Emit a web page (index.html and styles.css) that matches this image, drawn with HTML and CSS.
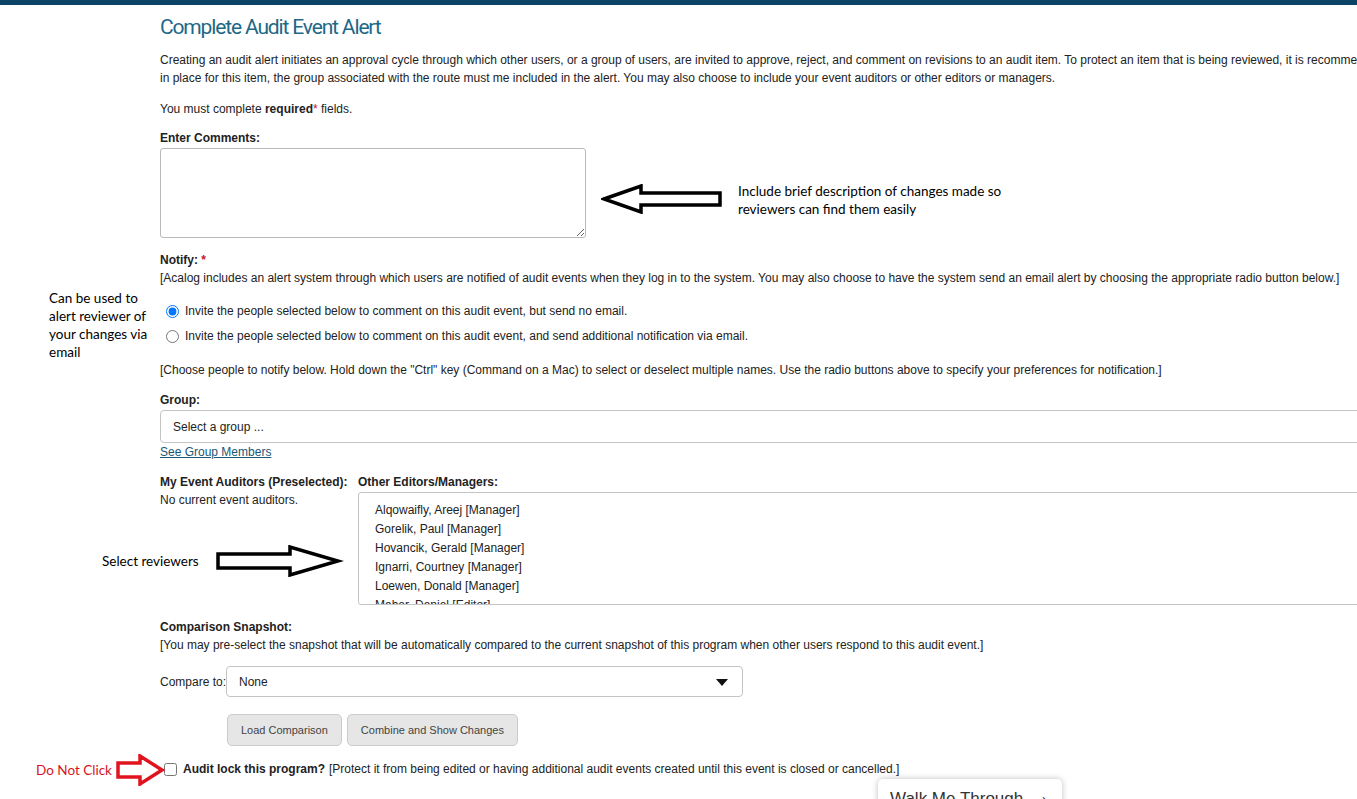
FILE: index.html
```html
<!DOCTYPE html>
<html lang="en">
<head>
    <meta charset="UTF-8">
    <meta name="viewport" content="width=device-width, initial-scale=1.0">
    <title>Complete Audit Event Alert</title>
    <link rel="stylesheet" href="styles.css">
</head>
<body>
    <div class="topbar"></div>

    <main class="page">
        <h1 class="title">Complete Audit Event Alert</h1>

        <p class="intro">Creating an audit alert initiates an approval cycle through which other users, or a group of users, are invited to approve, reject, and comment on revisions to an audit item. To protect an item that is being reviewed, it is recommended that you audit lock it. If an approval route is<br>in place for this item, the group associated with the route must me included in the alert. You may also choose to include your event auditors or other editors or managers.</p>

        <p class="required-note">You must complete <b>required</b><span class="req">*</span> fields.</p>

        <label class="label" for="comments">Enter Comments:</label>
        <textarea id="comments" class="comments"></textarea>

        <div class="label notify-label">Notify: <span class="req">*</span></div>
        <p class="hint">[Acalog includes an alert system through which users are notified of audit events when they log in to the system. You may also choose to have the system send an email alert by choosing the appropriate radio button below.]</p>

        <div class="radios">
            <label class="radio"><input type="radio" name="notify" checked> Invite the people selected below to comment on this audit event, but send no email.</label>
            <label class="radio"><input type="radio" name="notify"> Invite the people selected below to comment on this audit event, and send additional notification via email.</label>
        </div>

        <p class="hint choose">[Choose people to notify below. Hold down the "Ctrl" key (Command on a Mac) to select or deselect multiple names. Use the radio buttons above to specify your preferences for notification.]</p>

        <div class="label group-label">Group:</div>
        <div class="group-select">Select a group ...</div>
        <a class="link" href="#">See Group Members</a>

        <div class="people">
            <div class="auditors">
                <div class="label">My Event Auditors (Preselected):</div>
                <div class="none">No current event auditors.</div>
            </div>
            <div class="editors">
                <div class="label">Other Editors/Managers:</div>
                <ul class="listbox">
                    <li>Alqowaifly, Areej [Manager]</li>
                    <li>Gorelik, Paul [Manager]</li>
                    <li>Hovancik, Gerald [Manager]</li>
                    <li>Ignarri, Courtney [Manager]</li>
                    <li>Loewen, Donald [Manager]</li>
                    <li>Maher, Daniel [Editor]</li>
                    <li>Smith, Laura [Editor]</li>
                </ul>
            </div>
        </div>

        <div class="label snapshot-label">Comparison Snapshot:</div>
        <p class="hint">[You may pre-select the snapshot that will be automatically compared to the current snapshot of this program when other users respond to this audit event.]</p>

        <div class="compare">
            <span class="compare-label">Compare to:</span>
            <div class="dropdown">None</div>
        </div>

        <div class="buttons">
            <button class="btn">Load Comparison</button>
            <button class="btn">Combine and Show Changes</button>
        </div>

        <label class="lock"><input type="checkbox"> <b>Audit lock this program?</b> [Protect it from being edited or having additional audit events created until this event is closed or cancelled.]</label>

        <!-- annotations pasted over the screenshot -->
        <div class="note note-comments">Include brief description of changes made so<br>reviewers can find them easily</div>
        <svg class="arrow arrow-left" width="124" height="30" viewBox="0 0 124 30">
            <polygon points="3,15 40,2 40,9 119,9 119,21 40,21 40,28" fill="#fff" stroke="#000" stroke-width="3.5" stroke-linejoin="miter"/>
        </svg>

        <div class="note note-email">Can be used to<br>alert reviewer of<br>your changes via<br>email</div>

        <div class="note note-reviewers">Select reviewers</div>
        <svg class="arrow arrow-right" width="128" height="32" viewBox="0 0 128 32">
            <polygon points="2,9 74,9 74,2 122,16 74,30 74,23 2,23" fill="#fff" stroke="#000" stroke-width="3.5" stroke-linejoin="miter"/>
        </svg>

        <div class="note note-click">Do Not Click</div>
        <svg class="arrow arrow-red" width="50" height="32" viewBox="0 0 50 32">
            <polygon points="2,9 24,9 24,2 46,16 24,30 24,23 2,23" fill="#fff" stroke="#e0141e" stroke-width="3.5" stroke-linejoin="miter"/>
        </svg>
    </main>

    <div class="walkme">Walk Me Through <span class="chev">&rsaquo;</span></div>
</body>
</html>
```

FILE: styles.css
```css
html, body {
    margin: 0;
    padding: 0;
    overflow: hidden;
    height: 799px;
    background: #fff;
}

body {
    font-family: "Liberation Sans", Arial, sans-serif;
    font-size: 12px;
    line-height: 18px;
    color: #222;
}

.topbar {
    height: 5px;
    background: #0b4466;
}

.page {
    position: relative;
    width: 1540px;
    padding: 9px 0 0 160px;
}

.title {
    margin: 0;
    font-family: Roboto, "Liberation Sans", sans-serif;
    font-weight: 400;
    font-size: 21px;
    line-height: 26px;
    letter-spacing: -1.15px;
    color: #1e6886;
}

p {
    margin: 0;
}

.intro {
    margin-top: 11px;
}

.required-note {
    margin-top: 13px;
}

.req {
    color: #c8102e;
}

.label {
    display: block;
    font-weight: bold;
    color: #222;
}

label.label {
    margin-top: 11px;
}

.comments {
    display: block;
    box-sizing: border-box;
    width: 426px;
    height: 90px;
    margin: 1px 0 0;
    border: 1px solid #b9b9b9;
    border-radius: 3px;
    font: inherit;
}

.notify-label {
    margin-top: 13px;
}

.radios {
    margin-top: 15px;
    display: flex;
    flex-direction: column;
    gap: 7px;
}

.radio {
    display: flex;
    align-items: center;
    height: 18px;
}

.radio input {
    margin: 0 6px 0 6px;
    width: 13px;
    height: 13px;
}

.choose {
    margin-top: 16px;
}

.group-label {
    margin-top: 12px;
}

.group-select {
    box-sizing: border-box;
    height: 33px;
    margin-top: 1px;
    padding: 7px 12px;
    border: 1px solid #c4c4c4;
    border-radius: 4px;
    color: #222;
}

.link {
    display: inline-block;
    color: #1a5876;
    text-decoration: underline;
}

.people {
    display: flex;
    margin-top: 12px;
}

.auditors {
    width: 198px;
}

.editors {
    flex: 1;
}

.listbox {
    box-sizing: border-box;
    height: 113px;
    margin: 1px 0 0;
    padding: 8px 0 0 16px;
    list-style: none;
    border: 1px solid #c4c4c4;
    border-radius: 3px;
    overflow: hidden;
}

.listbox li {
    line-height: 19px;
}

.snapshot-label {
    margin-top: 13px;
}

.compare {
    display: flex;
    align-items: center;
    margin-top: 12px;
}

.compare-label {
    flex: none;
    width: 66px;
    white-space: nowrap;
}

.dropdown {
    position: relative;
    box-sizing: border-box;
    width: 517px;
    height: 31px;
    padding: 6px 12px;
    border: 1px solid #c4c4c4;
    border-radius: 4px;
}

.dropdown::after {
    content: '';
    position: absolute;
    right: 14px;
    top: 12px;
    border-left: 6px solid transparent;
    border-right: 6px solid transparent;
    border-top: 7px solid #111;
}

.buttons {
    display: flex;
    gap: 5px;
    margin: 17px 0 0 67px;
}

.btn {
    height: 32px;
    padding: 0 13px;
    font-family: "Liberation Sans", Arial, sans-serif;
    font-size: 11px;
    color: #444;
    background: #e6e6e6;
    border: 1px solid #cbcbcb;
    border-radius: 5px;
}

.lock {
    display: flex;
    align-items: center;
    margin-top: 14px;
    white-space: nowrap;
}

.lock input {
    margin: 0 6px 0 4px;
    width: 13px;
    height: 13px;
}

.lock b {
    margin-right: 4px;
}

/* annotations */
.note {
    position: absolute;
    font-family: Lato, "Open Sans", sans-serif;
    font-size: 13.5px;
    line-height: 18px;
    color: #000;
}

.note-comments {
    left: 738px;
    top: 177px;
}

.note-email {
    left: 49px;
    top: 284px;
}

.note-reviewers {
    left: 102px;
    top: 547px;
}

.note-click {
    left: 36px;
    top: 756px;
    color: #d7141e;
}

.arrow {
    position: absolute;
}

.arrow-left {
    left: 601px;
    top: 179px;
}

.arrow-right {
    left: 216px;
    top: 540px;
}

.arrow-red {
    left: 116px;
    top: 749px;
}

.walkme {
    position: absolute;
    left: 878px;
    top: 779px;
    width: 184px;
    height: 44px;
    box-sizing: border-box;
    padding: 11px 12px;
    background: #fff;
    border-radius: 5px;
    box-shadow: 0 0 6px rgba(0, 0, 0, 0.25);
    font-size: 17px;
    color: #333;
}

.chev {
    margin-left: 14px;
    font-size: 14px;
}
```
